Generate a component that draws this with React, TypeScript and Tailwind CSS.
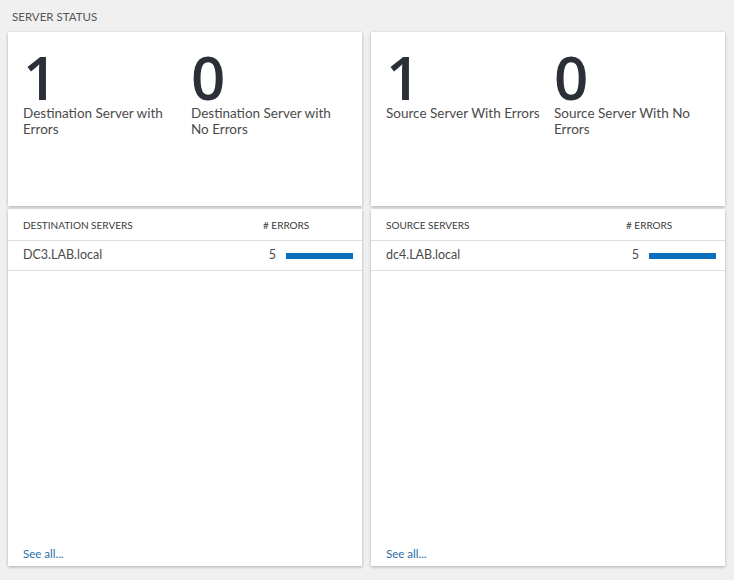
import React from "react";

type Stat = { value: number; label: string };
type Panel = {
  stats: Stat[];
  heading: string;
  rows: { name: string; errors: number }[];
};

const panels: Panel[] = [
  {
    stats: [
      { value: 1, label: "Destination Server with Errors" },
      { value: 0, label: "Destination Server with No Errors" },
    ],
    heading: "Destination Servers",
    rows: [{ name: "DC3.LAB.local", errors: 5 }],
  },
  {
    stats: [
      { value: 1, label: "Source Server With Errors" },
      { value: 0, label: "Source Server With No Errors" },
    ],
    heading: "Source Servers",
    rows: [{ name: "dc4.LAB.local", errors: 5 }],
  },
];

const card = "bg-white shadow-[0_1px_3px_rgba(0,0,0,0.28)]";

function StatusColumn({ panel }: { panel: Panel }) {
  const max = Math.max(...panel.rows.map((r) => r.errors));
  return (
    <div className="flex flex-col gap-[3px]">
      <div className={`${card} h-[174px] pt-[20px] px-[15px] flex`}>
        {panel.stats.map((s) => (
          <div key={s.label} className="w-[168px] shrink-0 pr-[9px]">
            <div className="text-[60px] leading-[50px] font-semibold text-[#2b3038] font-['Open_Sans',sans-serif]">{s.value}</div>
            <p className="text-[13.5px] leading-[16px] text-[#4a4a4a] mt-[3px]">{s.label}</p>
          </div>
        ))}
      </div>
      <div className={`${card} h-[357px] flex flex-col`}>
        <div className="flex items-center h-[32px] pt-[2px] border-b border-[#dedede] pl-[15px] pr-[9px] text-[10px] uppercase text-[#3a3a3a]">
          <span className="flex-1">{panel.heading}</span>
          <span className="w-[90px]"># Errors</span>
        </div>
        {panel.rows.map((r) => (
          <div key={r.name} className="flex items-center h-[30px] border-b border-[#dedede] pl-[15px] pr-[9px] text-[12.5px] text-[#4a4a4a]">
            <span className="flex-1">{r.name}</span>
            <span className="w-[90px] flex items-center">
              <span className="w-[13px] text-right">{r.errors}</span>
              <span className="ml-[10px] flex-1 h-[6px]">
                <span className="block h-full bg-[#0f6fbf]" style={{ width: `${(r.errors / max) * 100}%` }} />
              </span>
            </span>
          </div>
        ))}
        <div className="flex-1" />
        <a className="pl-[15px] pb-[4px] text-[11.5px] text-[#2a6fa5] cursor-pointer">See all...</a>
      </div>
    </div>
  );
}

export default function App() {
  return (
    <div className="w-[734px] h-[580px] bg-[#f0f0f0] px-[8px] pt-[10px] font-['Lato','Noto_Sans',sans-serif]">
      <h2 className="text-[11.5px] text-[#555] uppercase leading-[14px] pl-[4px] mb-[8px]">Server Status</h2>
      <div className="grid grid-cols-[354px_354px] gap-[9px]">
        {panels.map((p) => (
          <StatusColumn key={p.heading} panel={p} />
        ))}
      </div>
    </div>
  );
}
